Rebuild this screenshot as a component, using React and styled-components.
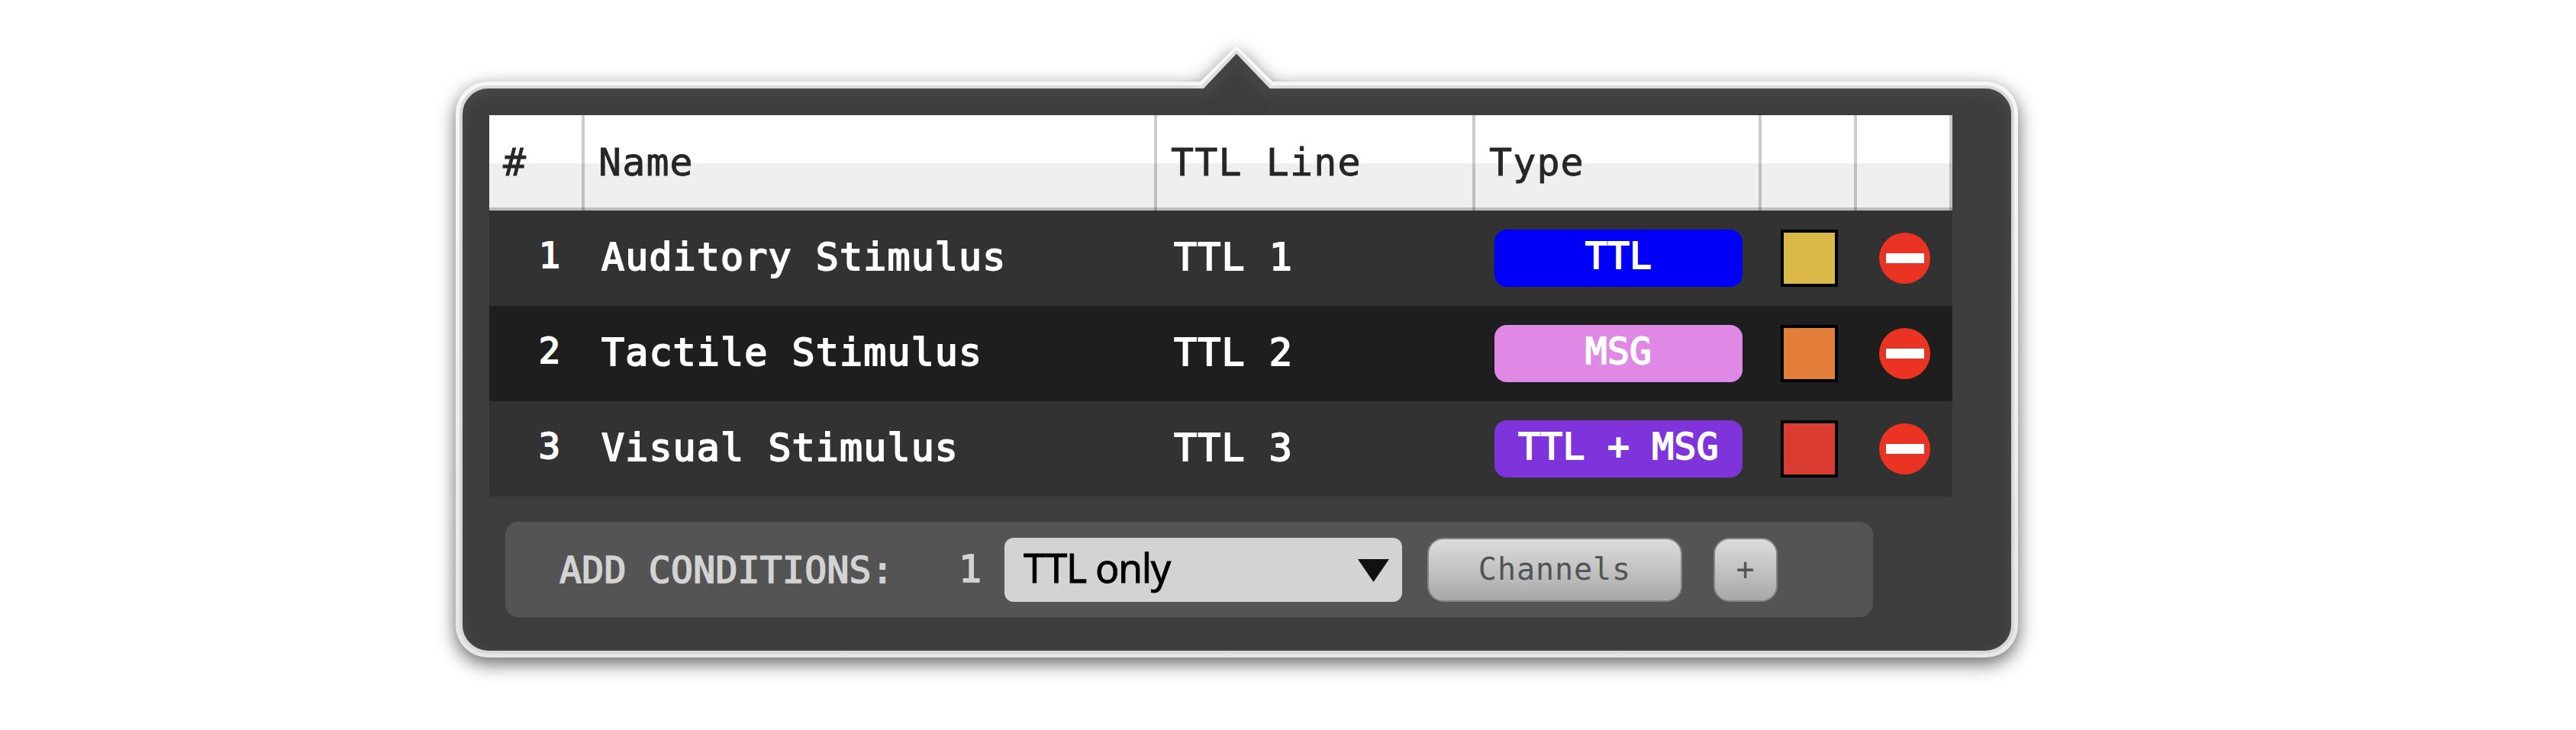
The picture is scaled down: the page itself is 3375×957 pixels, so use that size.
import React from "react";
import styled, { createGlobalStyle } from "styled-components";

const GlobalStyle = createGlobalStyle`
  body { margin: 0; background: #fff; }
  *, *::before, *::after { box-sizing: border-box; }
`;

const mono = `"DejaVu Sans Mono", monospace`;
const columns = "125px 750px 417px 375px 125px 125px";

const Page = styled.main`
  width: 3375px;
  height: 957px;
  padding: 107px 0 0 597px;
  overflow: hidden;
  background: #fff;
  font-family: ${mono};
  line-height: 1;
  white-space: pre;
`;

const Callout = styled.div`
  position: relative;
  width: 2047px;
  height: 755px;
  filter: drop-shadow(0 8px 12px rgba(0, 0, 0, 0.6));
`;

const Frame = styled.div`
  height: 100%;
  padding: 5px;
  border-radius: 42px;
  background: linear-gradient(#f7f7f7, #efefef 50%, #e6e6e6);
`;

const Panel = styled.section`
  height: 100%;
  padding: 35px 0 0 35px;
  border: 4px solid #d8d8d8;
  border-radius: 38px;
  background: #3d3d3d;
  background-clip: border-box;
  box-shadow: inset 0 6px 24px -4px rgba(255, 255, 255, 0.1);
`;

const Pointer = styled.svg`
  position: absolute;
  left: 963px;
  top: -57px;
`;

const Table = styled.div`
  width: 1917px;
`;

const HeaderRow = styled.div`
  display: grid;
  grid-template-columns: ${columns};
  height: 125px;
  background: linear-gradient(#fff 63px, #efefef 63px);
  box-shadow: inset 0 -4px 0 #bebebe;
`;

const HeaderCell = styled.div`
  display: flex;
  align-items: center;
  padding: 0 0 1px 18px;
  border-right: 4px solid rgba(0, 0, 0, 0.2);
  color: #262626;
  font-size: 50px;
  letter-spacing: 1.1px;
  -webkit-text-stroke: 0.8px #262626;
`;

const Row = styled.div`
  display: grid;
  grid-template-columns: ${columns};
  align-items: center;
  height: 125px;
  background: ${(p) => (p.$dark ? "#1e1e1e" : "#323232")};
  color: #fff;
`;

const Index = styled.div`
  padding: 0 32px 8px 0;
  text-align: right;
  font-size: 47px;
  -webkit-text-stroke: 1.9px #fff;
`;

const Cell = styled.div`
  padding: 0 0 3px 22px;
  font-size: 50px;
  letter-spacing: 1.1px;
  -webkit-text-stroke: 1.9px #fff;
`;

const TypePill = styled.div`
  display: flex;
  align-items: center;
  justify-content: center;
  justify-self: center;
  width: 325px;
  height: 75px;
  padding-bottom: 8px;
  border-radius: 16px;
  background: ${(p) => p.$color};
  color: #fff;
  font-size: 48px;
  letter-spacing: 0.3px;
  -webkit-text-stroke: 1.8px #fff;
`;

const Swatch = styled.div`
  justify-self: center;
  width: 75px;
  height: 75px;
  border: 4px solid #000;
  background: ${(p) => p.$color};
`;

const RemoveButton = styled.button`
  display: grid;
  place-items: center;
  justify-self: center;
  width: 67px;
  height: 67px;
  padding: 0;
  border: 0;
  border-radius: 50%;
  background: #eb3323;

  &::before {
    content: "";
    width: 50px;
    height: 13px;
    background: #fff;
  }
`;

const AddBar = styled.div`
  display: flex;
  align-items: center;
  width: 1792px;
  height: 125px;
  margin: 33px 0 0 21px;
  border-radius: 17px;
  background: #545454;
`;

const AddLabel = styled.div`
  width: 525px;
  padding: 0 0 0 71px;
  color: #d3d3d3;
  font-size: 48px;
  letter-spacing: 0.3px;
  -webkit-text-stroke: 1.7px #d3d3d3;
`;

const Count = styled.div`
  width: 129px;
  padding: 0 0 1px 69px;
  color: #d3d3d3;
  font-size: 50px;
  -webkit-text-stroke: 1.7px #d3d3d3;
`;

const Select = styled.div`
  display: flex;
  align-items: center;
  justify-content: space-between;
  width: 521px;
  height: 84px;
  padding: 0 17px 6px 25px;
  border-radius: 12px;
  background: #d3d3d3;
  color: #000;
  font-family: "Noto Sans", sans-serif;
  font-size: 52px;
  letter-spacing: -1.4px;
  -webkit-text-stroke: 0.8px #000;

  svg { margin-top: 9px; }
`;

const Button = styled.button`
  display: flex;
  align-items: center;
  justify-content: center;
  width: ${(p) => p.$width}px;
  height: 84px;
  margin: 0 0 0 ${(p) => p.$gap}px;
  padding: 0 0 2px;
  border: 2px solid #848484;
  border-radius: 21px;
  background: linear-gradient(#dcdcdc, #a8a8a8);
  background-clip: border-box;
  color: #545454;
  font-family: ${mono};
  font-size: 40px;
  line-height: 1;
  letter-spacing: 0.95px;
`;

const headers = ["#", "Name", "TTL Line", "Type", "", ""];
const conditions = [
  { name: "Auditory Stimulus", line: "TTL 1", type: "TTL", typeColor: "#0000f9", color: "#dab949" },
  { name: "Tactile Stimulus", line: "TTL 2", type: "MSG", typeColor: "#df88e6", color: "#e37e3a" },
  { name: "Visual Stimulus", line: "TTL 3", type: "TTL + MSG", typeColor: "#7f33da", color: "#db3c32" },
];

function CalloutPointer() {
  return (
    <Pointer width="120" height="100" viewBox="0 0 120 100">
      <defs>
        <clipPath id="pointer-inside">
          <path d="M16.5 66 L60 20 L104 66 H120 V100 H0 V66 Z" />
        </clipPath>
        <filter id="pointer-soften" x="-50%" y="-50%" width="200%" height="200%">
          <feGaussianBlur stdDeviation="7" />
        </filter>
      </defs>
      <path d="M4 66 L12.5 57 L60 10 L107.5 57 L116 66 Z" fill="#f8f8f8" />
      <path d="M4 66 V62 H14 L60 15 L106.5 62 H116 V66 Z" fill="#dedede" />
      <path d="M16.5 66.5 L60 20.5 L104 66.5 Z" fill="#454545" />
      <g clipPath="url(#pointer-inside)">
        <path d="M60 36 L90 68 L84 92 H36 L30 68 Z" fill="#3d3d3d" filter="url(#pointer-soften)" />
      </g>
    </Pointer>
  );
}

export default function App() {
  return (
    <>
      <GlobalStyle />
      <Page>
        <Callout>
          <Frame>
            <Panel>
              <Table>
                <HeaderRow>
                  {headers.map((label, i) => (
                    <HeaderCell key={i}>{label}</HeaderCell>
                  ))}
                </HeaderRow>
                {conditions.map((item, i) => (
                  <Row key={item.name} $dark={i % 2 === 1}>
                    <Index>{i + 1}</Index>
                    <Cell>{item.name}</Cell>
                    <Cell>{item.line}</Cell>
                    <TypePill $color={item.typeColor}>{item.type}</TypePill>
                    <Swatch $color={item.color} />
                    <RemoveButton aria-label="Remove" />
                  </Row>
                ))}
              </Table>
              <AddBar>
                <AddLabel>ADD CONDITIONS:</AddLabel>
                <Count>1</Count>
                <Select>
                  TTL only
                  <svg width="41" height="30" viewBox="0 0 41 30">
                    <path d="M0 0 H41 L20.5 30 Z" fill="#111" />
                  </svg>
                </Select>
                <Button $width={334} $gap={33}>Channels</Button>
                <Button $width={84} $gap={41}>+</Button>
              </AddBar>
            </Panel>
          </Frame>
          <CalloutPointer />
        </Callout>
      </Page>
    </>
  );
}
